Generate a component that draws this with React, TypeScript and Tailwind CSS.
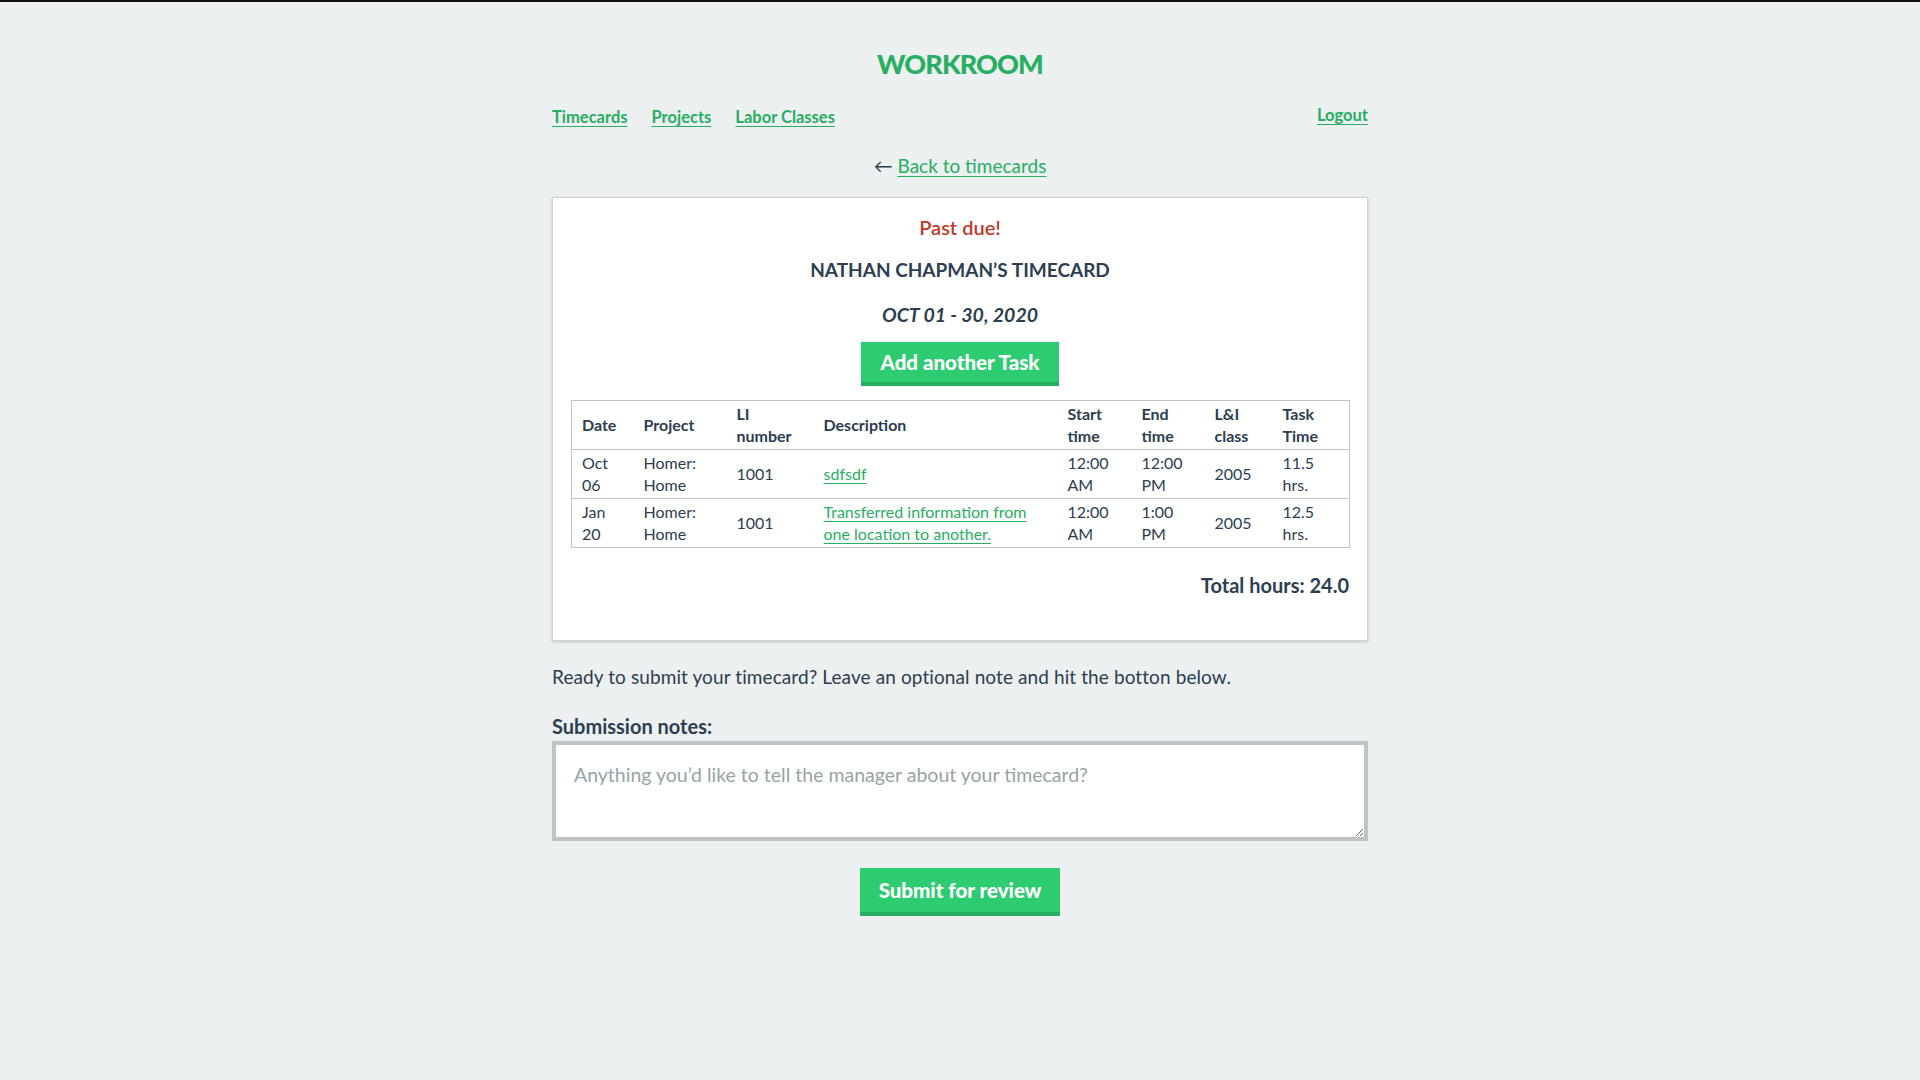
import React from "react";

const rows = [
  { date: ["Oct", "06"], project: ["Homer:", "Home"], li: "1001", desc: "sdfsdf", start: ["12:00", "AM"], end: ["12:00", "PM"], cls: "2005", time: ["11.5", "hrs."] },
  { date: ["Jan", "20"], project: ["Homer:", "Home"], li: "1001", desc: "Transferred information from one location to another.", start: ["12:00", "AM"], end: ["1:00", "PM"], cls: "2005", time: ["12.5", "hrs."] },
];

function Two({ v }: { v: string[] }) {
  return (
    <>
      {v[0]}
      <br />
      {v[1]}
    </>
  );
}

export default function App() {
  return (
    <div className="min-h-screen bg-[#ecf0f1] border-t-2 border-[#111] font-['Lato',sans-serif] text-[#2c3e50] pt-[45px] pb-10">
      <div className="w-[816px] mx-auto">
        <h1 className="text-center text-[27px] leading-[34px] font-black text-[#27ae60] tracking-[-0.9px]">WORKROOM</h1>

        <nav className="mt-[22px] flex justify-between items-center">
          <div className="flex gap-[24px] text-[16.5px] leading-[24px] font-bold">
            <a href="#" className="text-[#27ae60] underline underline-offset-[3px]">Timecards</a>
            <a href="#" className="text-[#27ae60] underline underline-offset-[3px]">Projects</a>
            <a href="#" className="text-[#27ae60] underline underline-offset-[3px]">Labor Classes</a>
          </div>
          <a href="#" className="mb-[4px] text-[16.5px] leading-[24px] font-bold text-[#27ae60] underline underline-offset-[3px]">Logout</a>
        </nav>

        <div className="mt-[21px] text-center text-[19px] leading-[27px]">
          <span className="text-[#2c3e50]">← </span>
          <a href="#" className="text-[#27ae60] underline underline-offset-[3px]">Back to timecards</a>
        </div>

        <div className="mt-[18px] bg-white border border-[#cfd4d7] shadow-[0_1px_3px_rgba(0,0,0,0.2)] px-[18px] pt-[16px] pb-[41px]">
          <p className="text-center text-[20px] leading-[27px] font-semibold text-[#c0392b]">Past due!</p>
          <h2 className="mt-[15px] text-center text-[19px] leading-[27px] font-bold uppercase">Nathan Chapman’s Timecard</h2>
          <h3 className="mt-[18px] text-center text-[19.5px] leading-[27px] font-bold italic">OCT 01 - 30, 2020</h3>
          <div className="mt-[14px] flex justify-center">
            <button className="w-[198px] h-[44px] bg-[#2ecc71] border-b-4 border-[#27ae60] text-white text-[20.5px] font-black">Add another Task</button>
          </div>

          <table className="mt-[14px] w-[778px] table-fixed border-collapse border border-[#bdc3c7] text-[16px] leading-[22px]">
            <colgroup>
              <col className="w-[62px]" />
              <col className="w-[93px]" />
              <col className="w-[87px]" />
              <col className="w-[244px]" />
              <col className="w-[74px]" />
              <col className="w-[73px]" />
              <col className="w-[68px]" />
              <col className="w-[77px]" />
            </colgroup>
            <thead>
              <tr className="border-b border-[#bdc3c7] text-left font-bold">
                <th className="px-[10px] py-[2px] align-middle">Date</th>
                <th className="px-[10px] py-[2px] align-middle">Project</th>
                <th className="px-[10px] py-[2px] align-middle">LI<br />number</th>
                <th className="px-[10px] py-[2px] align-middle">Description</th>
                <th className="px-[10px] py-[2px] align-middle">Start<br />time</th>
                <th className="px-[10px] py-[2px] align-middle">End<br />time</th>
                <th className="px-[10px] py-[2px] align-middle">L&amp;I<br />class</th>
                <th className="px-[10px] py-[2px] align-middle">Task<br />Time</th>
              </tr>
            </thead>
            <tbody>
              {rows.map((r, i) => (
                <tr key={i} className="border-b border-[#bdc3c7]">
                  <td className="px-[10px] py-[2px] align-middle"><Two v={r.date} /></td>
                  <td className="px-[10px] py-[2px] align-middle"><Two v={r.project} /></td>
                  <td className="px-[10px] py-[2px] align-middle">{r.li}</td>
                  <td className="px-[10px] py-[2px] align-middle">
                    <a href="#" className="text-[#27ae60] underline underline-offset-[3px]">{r.desc}</a>
                  </td>
                  <td className="px-[10px] py-[2px] align-middle"><Two v={r.start} /></td>
                  <td className="px-[10px] py-[2px] align-middle"><Two v={r.end} /></td>
                  <td className="px-[10px] py-[2px] align-middle">{r.cls}</td>
                  <td className="px-[10px] py-[2px] align-middle"><Two v={r.time} /></td>
                </tr>
              ))}
            </tbody>
          </table>

          <p className="mt-[24px] text-right text-[20px] leading-[27px] font-bold">Total hours: 24.0</p>
        </div>

        <p className="mt-[22px] text-[19px] leading-[27px] tracking-[0.1px]">Ready to submit your timecard? Leave an optional note and hit the botton below.</p>

        <label className="block mt-[23px] text-[20px] leading-[27px] font-bold">Submission notes:</label>
        <textarea
          className="mt-[1px] block w-full h-[100px] bg-white border-4 border-[#bdc3c7] px-[18px] py-[16px] text-[19.5px] leading-[27px] text-[#2c3e50] placeholder:text-[#95a5a6] outline-none"
          placeholder="Anything you’d like to tell the manager about your timecard?"
        />

        <div className="mt-[27px] flex justify-center">
          <button className="w-[200px] h-[48px] bg-[#2ecc71] border-b-4 border-[#27ae60] text-white text-[20.5px] font-black">Submit for review</button>
        </div>
      </div>
    </div>
  );
}
